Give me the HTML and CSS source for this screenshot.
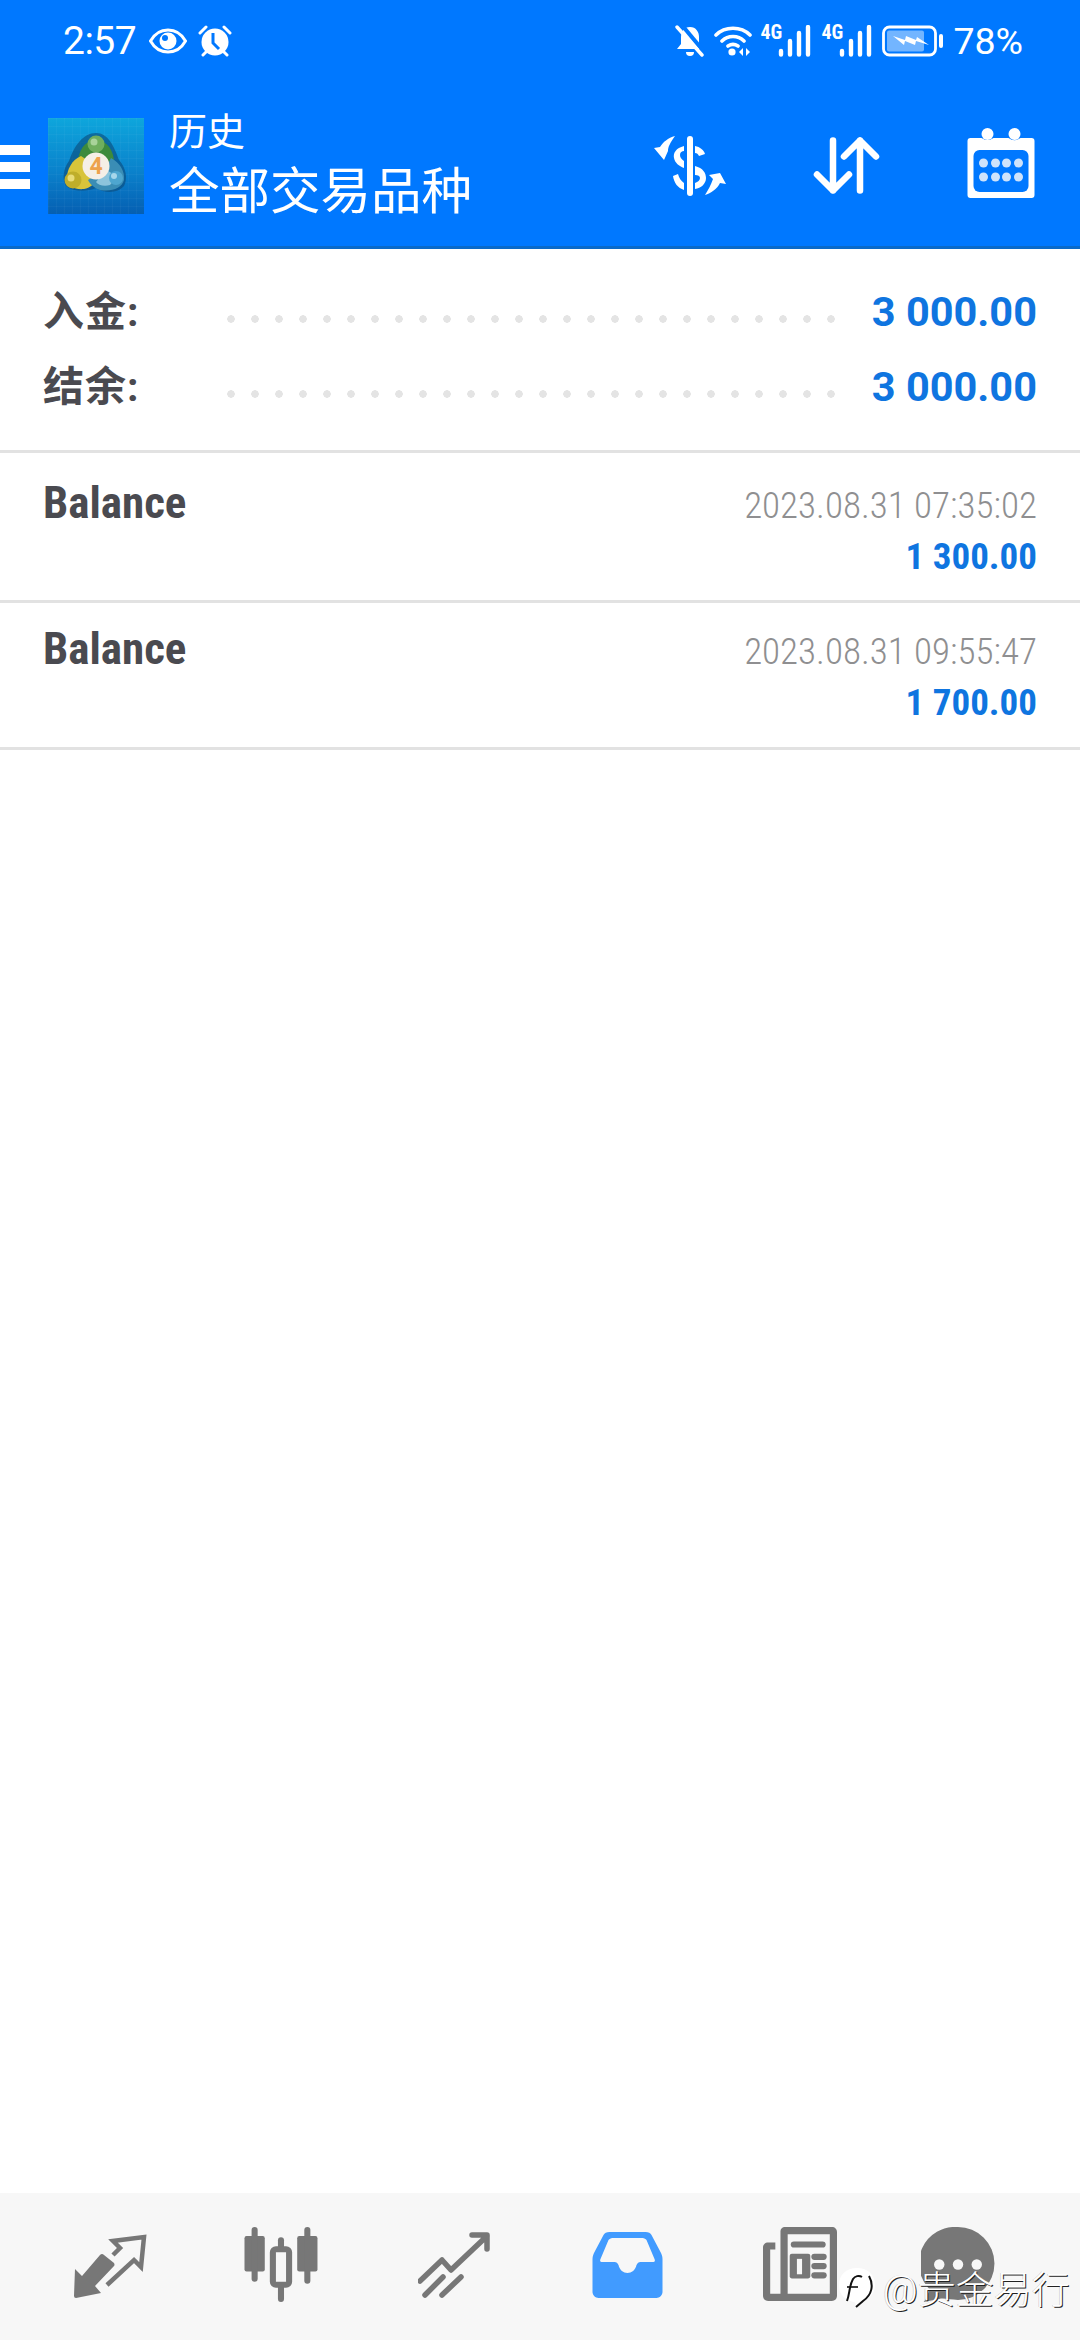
FILE: index.html
```html
<!DOCTYPE html>
<html lang="zh-CN">
<head>
<meta charset="UTF-8">
<meta name="viewport" content="width=device-width, initial-scale=1.0">
<title>历史</title>
<link rel="stylesheet" href="styles.css">
</head>
<body>
  <div class="phone">
    <div class="top">
      <div class="status">
        <div class="status-left">
          <span class="clock">2:57</span>
          <svg class="st-eye" viewBox="0 0 38 26"><path d="M1.500 13C6 5 12 2 19 2s13 3 17.500 11C32 21 26 24 19 24S6 21 1.500 13z" fill="none" stroke="#fff" stroke-width="3"/><circle cx="19" cy="13" r="8.500" fill="#fff"/><circle cx="16" cy="10" r="3" fill="#0078ff"/></svg>
          <svg class="st-alarm" viewBox="0 0 34 32"><circle cx="17" cy="17" r="13.500" fill="#fff"/><path d="M15 8v10l6 6" fill="none" stroke="#0078ff" stroke-width="3"/><path d="M2 8l6-6M32 8l-6-6M5 30l3-3M29 30l-3-3" stroke="#fff" stroke-width="3" stroke-linecap="round"/></svg>
        </div>
        <div class="status-right">
          <svg class="st-bell" viewBox="0 0 30 32"><path d="M15 2c-6 0-9 5-9 10v7l-4 5h26l-4-5v-7c0-5-3-10-9-10z" fill="#fff"/><path d="M11 27h8a4 4 0 0 1-8 0z" fill="#fff"/><path d="M6 -1l24 29" stroke="#0078ff" stroke-width="4"/><path d="M2 2l25 28" stroke="#fff" stroke-width="3.400" stroke-linecap="round"/></svg>
          <svg class="st-wifi" viewBox="0 0 38 32"><path d="M2 10C11 1 27 1 36 10M8 16c6-6 16-6 22 0M14 21c3-2 7-2 10 0" fill="none" stroke="#fff" stroke-width="3.600" stroke-linecap="round"/><circle cx="18" cy="27" r="3.600" fill="#fff"/><path d="M29 23v8l-4-4zM32 23v8l4-4z" fill="#fff"/></svg>
          <span class="signal"><i class="net">4G</i><svg viewBox="0 0 33 32"><path d="M3 26v3.500M12 16v13.500M21 8v21.500M30 2v27.500" stroke="#fff" stroke-width="4.400" stroke-linecap="round" fill="none"/></svg></span>
          <span class="signal"><i class="net">4G</i><svg viewBox="0 0 33 32"><path d="M3 26v3.500M12 16v13.500M21 8v21.500M30 2v27.500" stroke="#fff" stroke-width="4.400" stroke-linecap="round" fill="none"/></svg></span>
          <svg class="st-batt" viewBox="0 0 61 32"><rect x="1.500" y="2" width="52" height="28" rx="6" fill="none" stroke="#fff" stroke-width="2.800"/><rect x="5" y="5.500" width="37" height="21" rx="2" fill="#fff" opacity=".45"/><path d="M11 11l12 4 1-4 10 4 1-3 12 8-13-4-1 4-10-4-1 4z" fill="#fff"/><rect x="57" y="9" width="4" height="14" rx="2" fill="#fff"/></svg>
          <span class="pct">78%</span>
        </div>
      </div>
      <div class="appbar">
        <div class="burger"><b></b><b></b><b></b></div>
        <svg class="mt-logo" viewBox="0 0 96 96">
          <defs>
            <linearGradient id="tile" x1="0" y1="0" x2="0" y2="1"><stop offset="0" stop-color="#0ea6dc"/><stop offset=".55" stop-color="#0a82cc"/><stop offset="1" stop-color="#055fb2"/></linearGradient>
            <pattern id="grid" width="8" height="8" patternUnits="userSpaceOnUse"><path d="M8 0H0V8" fill="none" stroke="#fff" stroke-opacity=".06" stroke-width="1"/></pattern>
          </defs>
          <rect width="96" height="96" fill="url(#tile)"/>
          <rect width="96" height="96" fill="url(#grid)"/>
          <path d="M48 15c-13 0-22 13-27 28-6 8-7 18-3 25 8 6 20 6 30 2 10 6 22 5 28-2 4-8 2-18-5-26C66 28 60 15 48 15z" fill="#0b4a78" opacity=".6"/>
          <path d="M30 42c2-14 10-20 18-20s16 6 18 20L48 50z" fill="#3d8a3c"/>
          <circle cx="48" cy="26" r="8.500" fill="#6fae5e"/>
          <circle cx="46" cy="24" r="3.500" fill="#a9d39a"/>
          <path d="M33 38c-9 4-14 13-14 22 0 8 8 12 17 11 6-1 10-5 12-9V48z" fill="#d8c43a"/>
          <circle cx="25" cy="62" r="8.500" fill="#bfae2a"/>
          <circle cx="23" cy="60" r="3.500" fill="#e8dc78"/>
          <path d="M63 40c9 5 14 13 13 22-2 8-12 12-24 10-6-2-10-6-12-10l18-12z" fill="#3a8db5"/>
          <path d="M58 52c6 3 10 6 12 6l-8 9c-6 2-12 0-14-3z" fill="#8cc4dc"/>
          <circle cx="68" cy="60" r="7" fill="#4ea6cf"/>
          <circle cx="66" cy="58" r="3" fill="#a6d6ea"/>
          <circle cx="48" cy="48" r="13.500" fill="#f5efe6"/>
          <text class="mt-four" x="48" y="56">4</text>
        </svg>
        <div class="titles">
          <div class="title-sm">历史</div>
          <div class="title-lg">全部交易品种</div>
        </div>
        <div class="actions">
          <svg class="act-dollar" viewBox="14 15 72 60">
            <rect x="47" y="15" width="6" height="60" rx="3" fill="#fff"/>
            <g fill="#fff" fill-rule="evenodd">
              <path d="M44 25C36 27 33 32 34 37c1 5 5 8 10 10v-7c-3-2-4-4-4-6 0-3 2-4 4-4z"/>
              <path d="M55 25c5 1 9 4 10 8l-6 2c-1-2-2-3-4-3z"/>
              <path d="M33 55c1 7 5 12 11 14v-7c-3-2-5-5-6-9z"/>
              <path d="M55 45c8 2 11 7 11 12 0 6-5 10-11 11zm0 9v8c3-1 5-3 5-5s-2-3-5-3z"/>
              <path d="M35 15c-5 7-7 11-7 15l-4 9-10-12 6-1c3-5 8-9 15-11z"/>
              <path d="M65 74c6-2 12-6 15-12l6 1-6-11-11 2 4 4c-2 6-5 11-8 16z"/>
            </g>
          </svg>
          <svg class="act-sort" viewBox="0 0 67 57"><path d="M20 3.500v50M4 37.500l16 16 16-16" fill="none" stroke="#fff" stroke-width="6.500" stroke-linecap="round" stroke-linejoin="round"/><path d="M47 53.500v-50M31 19.500l16-16 16 16" fill="none" stroke="#fff" stroke-width="6.500" stroke-linecap="round" stroke-linejoin="round"/></svg>
          <svg class="act-cal" viewBox="0 0 67 70">
            <path d="M3 10h11a10 10 0 0 0 12 0h15a10 10 0 0 0 12 0h11a3 3 0 0 1 3 3v54a3 3 0 0 1-3 3H3a3 3 0 0 1-3-3V13a3 3 0 0 1 3-3z" fill="#fff"/>
            <circle cx="20" cy="6" r="6" fill="#fff"/><circle cx="47" cy="6" r="6" fill="#fff"/>
            <rect x="6" y="22" width="55" height="42" rx="6" fill="#0078ff"/>
            <g fill="#cfe3fb"><circle cx="16" cy="35" r="4.500"/><circle cx="28" cy="35" r="4.500"/><circle cx="39" cy="35" r="4.500"/><circle cx="51" cy="35" r="4.500"/><circle cx="16" cy="49" r="4.500"/><circle cx="28" cy="49" r="4.500"/><circle cx="39" cy="49" r="4.500"/><circle cx="51" cy="49" r="4.500"/></g>
          </svg>
        </div>
      </div>
    </div>

    <div class="summary">
      <div class="sum-row"><span class="sum-label">入金:</span><span class="dots"></span><span class="sum-value">3 000.00</span></div>
      <div class="sum-row"><span class="sum-label">结余:</span><span class="dots"></span><span class="sum-value">3 000.00</span></div>
    </div>

    <div class="deal">
      <div class="deal-name">Balance</div>
      <div class="deal-right">
        <div class="deal-date">2023.08.31 07:35:02</div>
        <div class="deal-amount">1 300.00</div>
      </div>
    </div>
    <div class="deal deal-last">
      <div class="deal-name">Balance</div>
      <div class="deal-right">
        <div class="deal-date">2023.08.31 09:55:47</div>
        <div class="deal-amount">1 700.00</div>
      </div>
    </div>

    <div class="spacer"></div>

    <div class="tabs">
      <svg class="tab tab-quotes" viewBox="12 13 76 67">
        <path d="M15 49l7 7 18-21q2-2 4 0l10 8q1 2 0 3L35 66l6 7-25 5q-2 0-2-2z" fill="#777"/>
        <path d="M53 35l7-7-7-7 31-4-3 30-7-7-27 25" fill="none" stroke="#777" stroke-width="4.500"/>
      </svg>
      <svg class="tab tab-chart" viewBox="0 0 74 74"><g fill="#777"><rect x="0" y="9" width="20" height="35" rx="2"/><rect x="7" y="0" width="6" height="54" rx="3"/><rect x="52" y="9" width="20" height="35" rx="2"/><rect x="59" y="0" width="6" height="56" rx="3"/><rect x="33" y="10" width="6" height="64" rx="3"/></g><rect x="28" y="22" width="16" height="35" rx="3" fill="#f7f7f7" stroke="#777" stroke-width="6"/></svg>
      <svg class="tab tab-trade" viewBox="0 0 72 66"><path d="M2 49l22-21 9 10 36-34M54 3h15v14" fill="none" stroke="#777" stroke-width="5.500" stroke-linecap="round" stroke-linejoin="round"/><path d="M7 63l18-18M24 63l19-18" stroke="#777" stroke-width="5.500" stroke-linecap="round"/></svg>
      <svg class="tab tab-inbox" viewBox="0 0 70 66"><path d="M17 0h36c3 0 5 1 6 3l9 17c1 2 2 4 2 7v33c0 3-3 6-6 6H6c-3 0-6-3-6-6V27c0-3 1-5 2-7l9-17c1-2 3-3 6-3zm3 6c-2 0-3 1-4 2L8 27c-1 2 0 3 2 3h12c2 0 3 1 4 3 1 5 5 8 9 8s8-3 9-8c1-2 2-3 4-3h12c2 0 3-1 2-3L54 8c-1-1-2-2-4-2z" fill="#419bff" fill-rule="evenodd"/></svg>
      <svg class="tab tab-news" viewBox="0 0 72 72"><path d="M21 0h46c3 0 5 2 5 5v62c0 3-2 5-5 5H5c-3 0-5-2-5-5V20c0-3 2-5 5-5h7v7H7v43h10V4c0-2 2-4 4-4zm3 7v58h41V7z" fill="#777"/><rect x="27" y="14" width="34" height="6" rx="3" fill="#777"/><rect x="26" y="26" width="20" height="24" rx="2" fill="#777"/><rect x="33" y="31" width="5" height="15" fill="#f7f7f7"/><rect x="47" y="26" width="15" height="6" rx="3" fill="#777"/><rect x="47" y="35" width="15" height="6" rx="3" fill="#777"/><rect x="47" y="44" width="15" height="6" rx="3" fill="#777"/></svg>
      <svg class="tab tab-chat" viewBox="0 0 70 72"><path d="M35 0a35 35 0 0 1 0 70c-7 0-13-2-18-1-5 1-10 2-15 3 3-4 5-8 5-13A35 35 0 0 1 35 0z" fill="#777"/><g fill="#f7f7f7"><circle cx="17" cy="36" r="5"/><circle cx="35" cy="36" r="5"/><circle cx="53" cy="36" r="5"/></g></svg>
    </div>

    <div class="mark">
      <svg class="mark-logo" viewBox="0 0 38 42"><path d="M19 1c11 0 18 7 18 17 0 9-6 14-14 17l-6 6c1-3 1-5-1-6C7 33 1 28 1 18 1 8 8 1 19 1z" fill="#fff"/><path d="M9 34c3-8 2-15 6-22 2-3 6-4 9-2" fill="none" stroke="#111" stroke-width="2"/><path d="M9 20h11" stroke="#111" stroke-width="1.600"/><path d="M31 9c5 9 3 19-6 25l-7 6" fill="none" stroke="#111" stroke-width="2"/></svg>
      <span class="mark-text">@贵金易行</span>
    </div>
  </div>
</body>
</html>
```

FILE: styles.css
```css
* { margin:0; padding:0; box-sizing:border-box; }
body { background:#fff; font-family:Roboto, "Noto Sans CJK SC", sans-serif; }
svg { display:block; flex-shrink:0; }

.phone { position:relative; width:1080px; height:2340px; display:flex; flex-direction:column; overflow:hidden; background:#fff; }

/* blue header */
.top { height:249px; background:#0078ff; border-bottom:3px solid #0a6ac9; color:#fff; flex-shrink:0; }
.status { height:82px; display:flex; justify-content:space-between; align-items:center; padding:0 57px 0 63px; }
.status-left { display:flex; align-items:center; }
.clock { font-size:39px; letter-spacing:-.5px; margin-right:13px; }
.st-eye { width:38px; height:26px; margin-right:11px; }
.st-alarm { width:34px; height:32px; }
.status-right { display:flex; align-items:center; }
.st-bell { width:30px; height:32px; margin-right:9px; }
.st-wifi { width:38px; height:32px; margin-right:8px; }
.signal { display:flex; align-items:flex-end; width:51px; height:32px; position:relative; margin-right:10px; }
.signal svg { width:33px; height:32px; margin-left:auto; }
.net { position:absolute; left:0; top:-3px; font-size:20px; line-height:20px; font-style:normal; font-weight:700; font-stretch:75%; }
.st-batt { width:61px; height:32px; margin-right:10px; }
.pct { font-size:37.500px; }

.appbar { height:164px; padding-top:3px; display:flex; align-items:center; }
.burger { width:30px; height:44px; display:flex; flex-direction:column; justify-content:space-between; margin:3px 18px 0 0; }
.burger b { display:block; height:10px; background:#fff; }
.mt-logo { width:96px; height:96px; margin-right:25px; }
.mt-four { font-size:23px; font-weight:700; fill:#eda24c; text-anchor:middle; }
.titles { display:flex; flex-direction:column; gap:9px; }
.title-sm { font-size:38px; line-height:44px; }
.title-lg { font-size:50.500px; line-height:58px; }
.actions { margin-left:auto; display:flex; align-items:center; padding-right:43px; }
.act-dollar { width:72px; height:60px; margin-right:87px; }
.act-sort { width:67px; height:57px; margin-right:85px; }
.act-cal { width:72px; height:70px; margin-top:-5px; }

/* totals */
.summary { height:204px; padding-top:25px; border-bottom:3px solid #e2e2e2; flex-shrink:0; }
.sum-row { height:75px; display:flex; align-items:center; padding:0 43px; }
.sum-label { width:176px; font-size:41px; font-weight:700; letter-spacing:1px; color:#4a4a50; margin-bottom:8px; }
.dots { width:624px; height:8px; margin-top:15px; background:radial-gradient(circle, #e4e4e4 3.500px, transparent 4px) left center / 24px 8px repeat-x; }
.sum-value { margin-left:auto; font-size:41.500px; font-weight:700; color:#0f75e0; }

/* deals */
.deal { display:flex; justify-content:space-between; height:150px; padding:23px 43px 0; border-bottom:3px solid #e2e2e2; flex-shrink:0; }
.deal-last { height:147px; padding-top:19px; }
.deal-name { font-size:45px; line-height:54px; font-weight:700; font-stretch:75%; color:#4a4a50; }
.deal-right { text-align:right; padding-top:5px; }
.deal-date { font-size:37px; line-height:50px; font-weight:350; font-stretch:75%; color:#8f8f91; }
.deal-amount { font-size:37px; line-height:51px; font-weight:700; font-stretch:75%; color:#0f75e0; }

.spacer { flex:1; }

/* bottom tabs */
.tabs { position:relative; height:147px; background:#f7f7f7; flex-shrink:0; }
.tab { position:absolute; }
.tab-quotes { left:72px; top:40px; width:76px; height:67px; }
.tab-chart { left:243px; top:34px; width:78px; height:75px; }
.tab-trade { left:418px; top:39px; width:72px; height:66px; }
.tab-inbox { left:591px; top:39px; width:73px; height:66px; }
.tab-news { left:762px; top:34px; width:76px; height:74px; }
.tab-chat { left:921px; top:34px; width:74px; height:75px; }

/* watermark over the tab bar */
.mark { position:absolute; left:838px; top:2259px; display:flex; align-items:center; }
.mark-logo { width:38px; height:42px; margin:3px 7px 0 0; }
.mark-text { font-size:38px; font-weight:300; color:#fff; text-shadow:1px 1px 0 #222, -1px 0 0 rgba(0,0,0,.15); }
```
